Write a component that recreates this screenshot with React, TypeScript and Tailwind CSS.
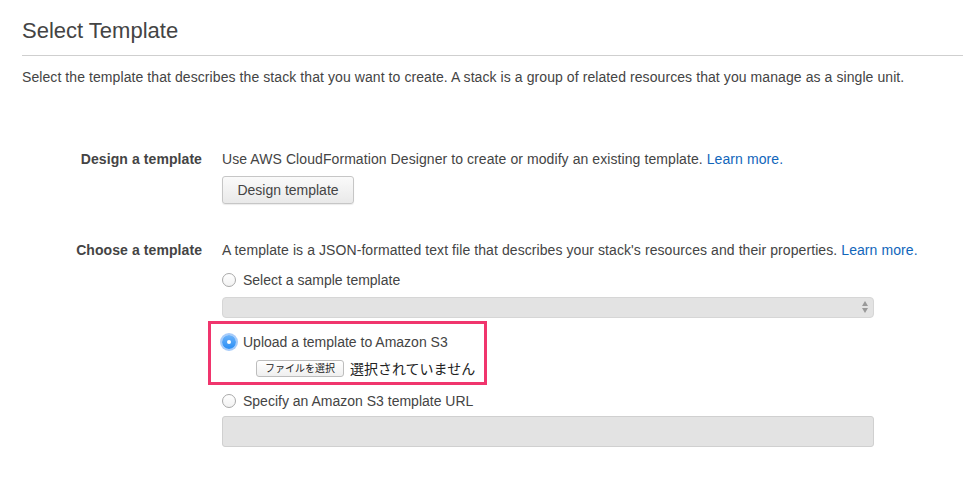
import React from "react";

function Radio({ checked = false }: { checked?: boolean }) {
  if (checked) {
    return (
      <span className="relative flex h-[14px] w-[14px] shrink-0 items-center justify-center rounded-full bg-[linear-gradient(#6cb3fa,#2a8ef5)] shadow-[0_0_0_2px_rgba(92,160,245,0.55)]">
        <span className="h-[4px] w-[4px] rounded-full bg-white" />
      </span>
    );
  }
  return (
    <span className="h-[14px] w-[14px] shrink-0 rounded-full border border-[#a9a9a9] bg-[linear-gradient(#ffffff,#f2f2f2)]" />
  );
}

export default function App() {
  return (
    <div
      className="min-h-[489px] w-[963px] bg-white text-[#444] pl-[22px]"
      style={{ fontFamily: '"Liberation Sans", Arial, "Noto Sans CJK JP", sans-serif' }}
    >
      <div className="pt-[18px]">
        <h1 className="text-[22px] leading-[26px] text-[#444]">Select Template</h1>
      </div>
      <div className="mt-[11px] h-px w-[941px] bg-[#cfcfcf]" />
      <p className="mt-[13px] text-[14px] leading-[16px] tracking-[0.08px]">
        Select the template that describes the stack that you want to create. A stack is a group of related resources that you manage as a single unit.
      </p>

      <div className="mt-[66px] grid grid-cols-[180px_1fr] gap-x-[20px] text-[14px] leading-[16px] tracking-[0.08px]">
        <div className="text-right font-bold">Design a template</div>
        <div>
          <div>
            Use AWS CloudFormation Designer to create or modify an existing template.{" "}
            <span className="text-[#1166bb]">Learn more.</span>
          </div>
          <button className="mt-[9px] h-[28px] w-[132px] rounded-[3px] border border-[#c6c6c6] bg-[linear-gradient(#fafafa,#e9e9e9)] text-[14px] tracking-normal text-[#444] shadow-[0_1px_1px_rgba(0,0,0,0.08)]">
            Design template
          </button>
        </div>

        <div className="mt-[38px] text-right font-bold">Choose a template</div>
        <div className="mt-[38px]">
          <div>
            A template is a JSON-formatted text file that describes your stack's resources and their properties.{" "}
            <span className="text-[#1166bb]">Learn more.</span>
          </div>

          <div className="mt-[14px] flex items-center gap-[7px] tracking-normal">
            <Radio />
            <span className="text-[14px]">Select a sample template</span>
          </div>
          <div className="relative mt-[9px] h-[21px] w-[652px] rounded-[4px] border border-[#d6d6d6] bg-[#e3e3e3]">
            <div className="absolute right-[5px] top-[3px] flex flex-col items-center gap-[2px]">
              <span className="h-0 w-0 border-x-[3px] border-b-[5px] border-x-transparent border-b-[#9a9a9a]" />
              <span className="h-0 w-0 border-x-[3px] border-t-[5px] border-x-transparent border-t-[#9a9a9a]" />
            </div>
          </div>

          <div className="-ml-[14px] mt-[3px] w-[279px] border-[3px] border-[#f0356d] pb-[5px] pl-[10px] pt-[10px] tracking-normal">
            <div className="flex items-center gap-[7px] pl-px">
              <Radio checked />
              <span className="text-[14px]">Upload a template to Amazon S3</span>
            </div>
            <div className="mt-[10px] flex items-center gap-[6px] pl-[35px]">
              <span className="flex h-[17px] items-center rounded-[3px] border border-[#bdbdbd] bg-[linear-gradient(#ffffff,#efefef)] px-[8px] text-[10px] text-[#222]">
                ファイルを選択
              </span>
              <span className="text-[14px] text-[#222]">選択されていません</span>
            </div>
          </div>

          <div className="mt-[8px] flex items-center gap-[7px] tracking-normal">
            <Radio />
            <span className="text-[14px]">Specify an Amazon S3 template URL</span>
          </div>
          <div className="mt-[7px] h-[31px] w-[652px] rounded-[3px] border border-[#d0d0d0] bg-[#e3e3e3]" />
        </div>
      </div>
    </div>
  );
}
